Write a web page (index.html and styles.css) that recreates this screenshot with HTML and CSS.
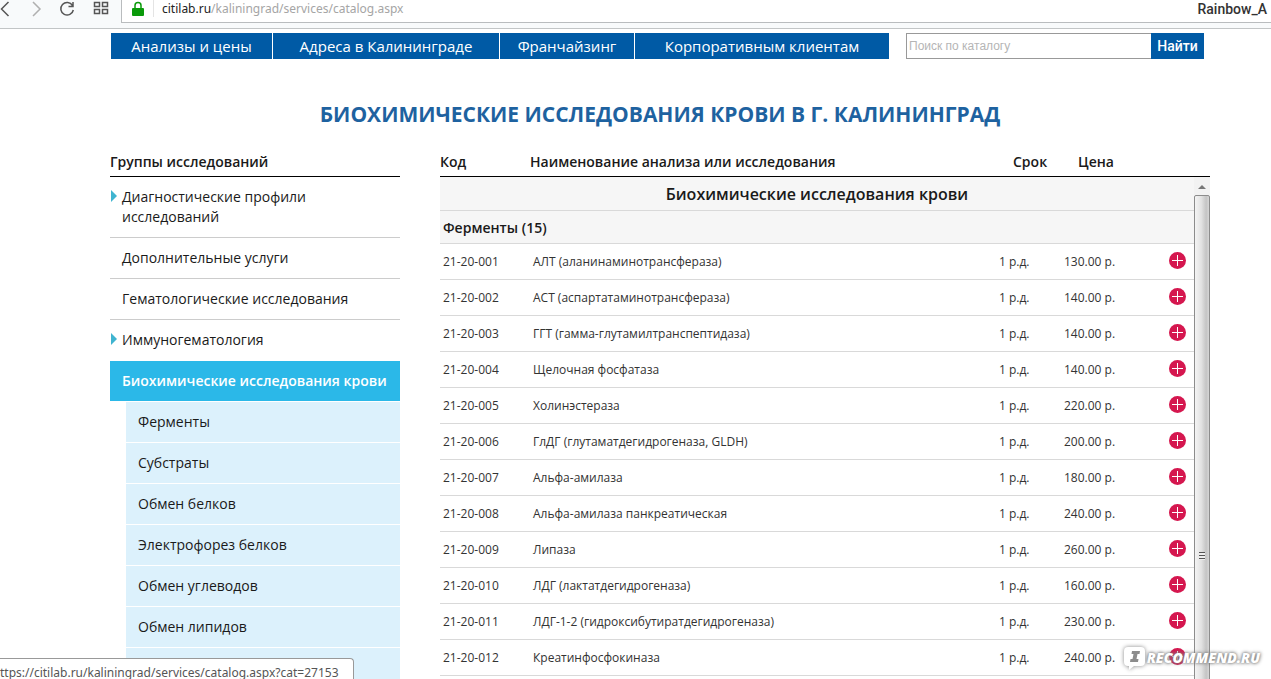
FILE: index.html
```html
<!DOCTYPE html>
<html lang="ru">
<head>
<meta charset="utf-8">
<title>Биохимические исследования крови</title>
<link rel="stylesheet" href="styles.css">
</head>
<body>
<header class="browser">
  <div class="browser-buttons">
    <button class="tool back" aria-label="Назад"><svg width="12" height="16" viewBox="0 0 12 16"><path d="M8.500 1 1.500 8l7 7"/></svg></button>
    <button class="tool forward" aria-label="Вперёд"><svg width="12" height="16" viewBox="0 0 12 16"><path d="m3 1 7 7-7 7"/></svg></button>
    <button class="tool reload" aria-label="Обновить"><svg width="16" height="16" viewBox="0 0 16 16"><path d="M13.500 4.500A6.300 6.300 0 1 0 14.300 9M14 1v4.500H9.500"/></svg></button>
    <button class="tool grid" aria-label="Экспресс-панель"><svg width="16" height="16" viewBox="0 0 16 16"><path d="M1.500 1.500h5v4h-5zM9.500 1.500h5v4h-5zM1.500 8.500h5v4h-5zM9.500 8.500h5v4h-5z"/></svg></button>
  </div>
  <div class="address">
    <svg class="lock" width="12" height="16" viewBox="0 0 12 16"><path d="M3 8V4.500a3 3 0 0 1 6 0V8" fill="none" stroke="#0a9a0a" stroke-width="1.500"/><rect x="0" y="7" width="12" height="8" rx="1" fill="#0a9a0a"/></svg>
    <span class="url"><b>citilab.ru</b>/kaliningrad/services/catalog.aspx</span>
    <span class="user">Rainbow_A</span>
  </div>
</header>

<main class="page">
  <div class="top">
    <nav class="menu">
      <a href="#">Анализы и цены</a>
      <a href="#">Адреса в Калининграде</a>
      <a href="#">Франчайзинг</a>
      <a href="#">Корпоративным клиентам</a>
    </nav>
    <form class="search">
      <input type="text" placeholder="Поиск по каталогу" aria-label="Поиск по каталогу">
      <button type="button">Найти</button>
    </form>
  </div>

  <h1>Биохимические исследования крови в г. Калининград</h1>

  <div class="columns">
    <aside class="groups">
      <h2>Группы исследований</h2>
      <ul class="group-list">
        <li><a class="has-children" href="#">Диагностические профили исследований</a></li>
        <li><a href="#">Дополнительные услуги</a></li>
        <li><a href="#">Гематологические исследования</a></li>
        <li><a class="has-children" href="#">Иммуногематология</a></li>
        <li class="current"><a href="#">Биохимические исследования крови</a>
          <ul class="sub-list">
            <li><a href="#">Ферменты</a></li>
            <li><a href="#">Субстраты</a></li>
            <li><a href="#">Обмен белков</a></li>
            <li><a href="#">Электрофорез белков</a></li>
            <li><a href="#">Обмен углеводов</a></li>
            <li><a href="#">Обмен липидов</a></li>
            <li class="blank"></li>
          </ul>
        </li>
      </ul>
    </aside>

    <section class="catalog">
      <div class="catalog-head">
        <span>Код</span><span>Наименование анализа или исследования</span><span>Срок</span><span>Цена</span>
      </div>
      <div class="catalog-body">
        <table>
          <colgroup><col class="c-code"><col><col class="c-term"><col class="c-price"><col class="c-add"></colgroup>
          <tbody>
            <tr class="title"><th colspan="5">Биохимические исследования крови</th></tr>
            <tr class="section"><th colspan="5">Ферменты (15)</th></tr>
            <tr><td>21-20-001</td><td>АЛТ (аланинаминотрансфераза)</td><td>1 р.д.</td><td>130.00 р.</td><td><button class="add" aria-label="Добавить"></button></td></tr>
            <tr><td>21-20-002</td><td>АСТ (аспартатаминотрансфераза)</td><td>1 р.д.</td><td>140.00 р.</td><td><button class="add" aria-label="Добавить"></button></td></tr>
            <tr><td>21-20-003</td><td>ГГТ (гамма-глутамилтранспептидаза)</td><td>1 р.д.</td><td>140.00 р.</td><td><button class="add" aria-label="Добавить"></button></td></tr>
            <tr><td>21-20-004</td><td>Щелочная фосфатаза</td><td>1 р.д.</td><td>140.00 р.</td><td><button class="add" aria-label="Добавить"></button></td></tr>
            <tr><td>21-20-005</td><td>Холинэстераза</td><td>1 р.д.</td><td>220.00 р.</td><td><button class="add" aria-label="Добавить"></button></td></tr>
            <tr><td>21-20-006</td><td>ГлДГ (глутаматдегидрогеназа, GLDH)</td><td>1 р.д.</td><td>200.00 р.</td><td><button class="add" aria-label="Добавить"></button></td></tr>
            <tr><td>21-20-007</td><td>Альфа-амилаза</td><td>1 р.д.</td><td>180.00 р.</td><td><button class="add" aria-label="Добавить"></button></td></tr>
            <tr><td>21-20-008</td><td>Альфа-амилаза панкреатическая</td><td>1 р.д.</td><td>240.00 р.</td><td><button class="add" aria-label="Добавить"></button></td></tr>
            <tr><td>21-20-009</td><td>Липаза</td><td>1 р.д.</td><td>260.00 р.</td><td><button class="add" aria-label="Добавить"></button></td></tr>
            <tr><td>21-20-010</td><td>ЛДГ (лактатдегидрогеназа)</td><td>1 р.д.</td><td>160.00 р.</td><td><button class="add" aria-label="Добавить"></button></td></tr>
            <tr><td>21-20-011</td><td>ЛДГ-1-2 (гидроксибутиратдегидрогеназа)</td><td>1 р.д.</td><td>230.00 р.</td><td><button class="add" aria-label="Добавить"></button></td></tr>
            <tr><td>21-20-012</td><td>Креатинфосфокиназа</td><td>1 р.д.</td><td>240.00 р.</td><td><button class="add" aria-label="Добавить"></button></td></tr>
          </tbody>
        </table>
        <div class="scrollbar">
          <div class="scroll-up"></div>
          <div class="thumb"><i class="grip"></i></div>
        </div>
      </div>
    </section>
  </div>
</main>

<div class="status">ttps://citilab.ru/kaliningrad/services/catalog.aspx?cat=27153</div>
<div class="watermark">
  <svg width="24" height="26" viewBox="0 0 24 26"><path d="M5 2h13a4 4 0 0 1 4 4v11a4 4 0 0 1-4 4h-7l-5 4v-4H5a4 4 0 0 1-4-4V6a4 4 0 0 1 4-4z" fill="#fff"/><path d="M9 6h8l-.5 3h-2l-1 5h2l-.5 3H7l.5-3h2l1-5h-2z" fill="#8c8c8c"/></svg>
  <span>RECOMMEND.RU</span>
</div>
</body>
</html>
```

FILE: styles.css
```css
* { box-sizing: border-box; }

body {
  margin: 0;
  height: 100vh;
  overflow: hidden;
  display: flex;
  flex-direction: column;
  background: #fff;
  color: #1a1a1a;
  font-family: "Open Sans", "Noto Sans", sans-serif;
  font-size: 14px;
  line-height: 20px;
}

a { color: inherit; text-decoration: none; }
button { border: 0; padding: 0; font-family: inherit; }
ul { list-style: none; margin: 0; padding: 0; }

/* Browser toolbar */
.browser {
  flex: none;
  display: flex;
  height: 29px;
  background: #f8fafb;
  border-bottom: 1px solid #c2c5c6;
}
.browser-buttons {
  flex: none;
  width: 121px;
  height: 17px;
  display: flex;
  align-items: center;
  justify-content: space-between;
  padding-right: 12px;
}
.tool { display: flex; background: none; }
.tool svg { fill: none; stroke: #555; stroke-width: 1.5; }
.forward svg { stroke: #b0b0b0; }
.address {
  flex: 1;
  height: 23px;
  display: flex;
  align-items: center;
  padding: 0 4px 5px 10px;
  background: #fff;
  border-left: 1px solid #b9bcbe;
  border-bottom: 1px solid #b9bcbe;
}
.url {
  flex: 1;
  margin-left: 9px;
  padding-left: 8px;
  border-left: 1px solid #e4e4e4;
  color: #a5a5a5;
  font-family: "Noto Sans", sans-serif;
  font-size: 12px;
  line-height: 17px;
}
.url b { color: #222; font-weight: 400; }
.user {
  color: #333;
  font-family: Roboto, sans-serif;
  font-size: 14px;
  font-weight: 500;
}

/* Page */
.page {
  flex: 1;
  min-height: 0;
  overflow: hidden;
  padding: 4px 61px 0 110px;
}
.top {
  display: flex;
  gap: 17px;
  padding: 0 6px 0 1px;
}
.menu {
  flex: 778;
  display: grid;
  grid-template-columns: 161fr 226fr 134fr 254fr;
  gap: 1px;
}
.menu a {
  height: 26px;
  background: #005aa5;
  color: #fff;
  font-size: 15px;
  line-height: 27px;
  text-align: center;
}
.search { flex: 298; display: flex; }
.search input {
  flex: 1;
  min-width: 0;
  height: 26px;
  padding: 0 2px;
  border: 1px solid #999;
  border-right: 0;
  font-family: "Liberation Sans", Arial, sans-serif;
  font-size: 12px;
}
.search input::placeholder { color: #b5b5b5; }
.search button {
  width: 53px;
  background: #005aa5;
  color: #fff;
  font-family: Roboto, sans-serif;
  font-size: 14px;
  font-weight: 500;
}

h1 {
  margin: 40px 0 22px;
  color: #1e62a0;
  font-size: 21px;
  font-weight: 700;
  line-height: 30px;
  text-align: center;
  text-transform: uppercase;
}

.columns { display: flex; gap: 40px; }

/* Sidebar */
.groups { flex: none; width: 290px; }
.groups h2 {
  margin: 0;
  height: 26px;
  border-bottom: 1px solid #000;
  font-size: 14px;
  font-weight: 600;
  line-height: 22px;
}
.group-list a {
  display: block;
  padding: 10px 12px;
}
.group-list > li { border-bottom: 1px solid #ccc; }
.group-list > li:nth-child(n+4) { border-bottom-color: transparent; }
.has-children { position: relative; }
.has-children::before {
  content: "";
  position: absolute;
  left: 1px;
  top: 13px;
  border: solid transparent;
  border-width: 6px 0 6px 6px;
  border-left-color: #3fb4d0;
}
.current > a {
  background: #2bb8e8;
  color: #fff;
  font-weight: 600;
}
.sub-list { padding-left: 16px; }
.sub-list li {
  height: 41px;
  background: #dcf1fc;
  border-top: 1px solid #fff;
}

/* Catalog */
.catalog { flex: 1; }
.catalog-head {
  display: grid;
  grid-template-columns: 90px 1fr 65px 132px;
  height: 26px;
  border-bottom: 1px solid #000;
  font-weight: 600;
  line-height: 22px;
}
.catalog-body { display: flex; }
.catalog table {
  flex: 1;
  align-self: flex-start;
  table-layout: fixed;
  border-collapse: separate;
  border-spacing: 0;
}
.c-code { width: 90px; }
.c-term { width: 65px; }
.c-price { width: 105px; }
.c-add { width: 28px; }
th, td {
  height: 36px;
  padding: 0 0 0 3px;
  border-bottom: 1px solid #d9d9d9;
  text-align: left;
}
th {
  height: 33px;
  padding-top: 2px;
  background: #f6f6f6;
  font-size: 14px;
  font-weight: 600;
}
.title th {
  height: 34px;
  padding: 0;
  font-size: 16px;
  text-align: center;
}
td { color: #333; font-size: 12px; }
.add {
  display: block;
  width: 17px;
  height: 17px;
  margin-bottom: 2px;
  border-radius: 50%;
  background:
    linear-gradient(#fff, #fff) center / 11px 1px no-repeat,
    linear-gradient(#fff, #fff) center / 1px 11px no-repeat,
    #d5174f;
}

.scrollbar {
  flex: none;
  width: 16px;
  padding-top: 1px;
  background: #f2f2f2;
}
.scroll-up {
  display: flex;
  height: 17px;
  align-items: center;
  justify-content: center;
}
.scroll-up::before {
  content: "";
  border: solid transparent;
  border-width: 0 4px 4px;
  border-bottom-color: #777;
}
.thumb {
  display: flex;
  height: 722px;
  align-items: center;
  justify-content: center;
  border: 1px solid #8c8c8c;
  border-radius: 2px;
  background: linear-gradient(to right, #f4f4f4, #e2e2e2 45%, #c4c4c4 80%, #d6d6d6);
}
.grip {
  width: 6px;
  height: 8px;
  background: repeating-linear-gradient(#555 0 1px, #eee 1px 3px);
}

/* Overlays */
.status {
  position: absolute;
  left: 0;
  bottom: 0;
  height: 21px;
  padding: 4px 14px 0 0;
  background: #fff;
  border: 1px solid #999;
  border-width: 1px 1px 0 0;
  border-radius: 0 4px 0 0;
  color: #555;
  font-family: "Noto Sans", sans-serif;
  font-size: 12px;
}
.watermark {
  position: absolute;
  right: 11px;
  bottom: 8px;
  display: flex;
  align-items: center;
  color: #fff;
  font-size: 14px;
  font-style: italic;
  font-weight: 800;
  text-shadow: 0 0 3px #777, 0 0 4px #888;
}
.watermark svg { filter: drop-shadow(0 0 2px #888); }
```
